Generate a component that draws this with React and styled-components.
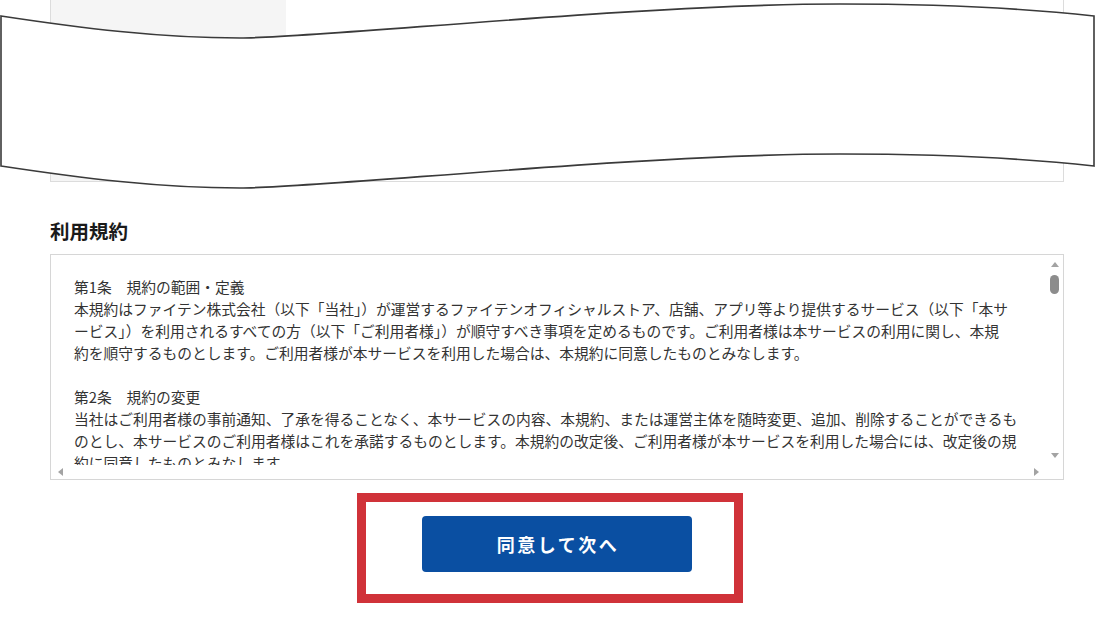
import React from "react";
import styled, { createGlobalStyle } from "styled-components";

const GlobalStyle = createGlobalStyle`
  body {
    margin: 0;
    background: #fff;
    font-family: "Noto Sans CJK JP", "Noto Sans", sans-serif;
    color: #333;
  }
`;

const Page = styled.div`
  position: relative;
  width: 1095px;
  height: 643px;
  overflow: hidden;
`;

const Content = styled.div`
  margin-left: 50px;
  width: 1014px;
  display: flex;
  flex-direction: column;
`;

const TopBox = styled.div`
  height: 182px;
  box-sizing: border-box;
  border: 1px solid #dcdcdc;
  border-top: none;
  display: flex;
`;

const GreyPanel = styled.div`
  width: 235px;
  background: #f5f5f5;
`;

const Wave = styled.svg`
  position: absolute;
  top: 0;
  left: 0;
  pointer-events: none;
`;

const Title = styled.h2`
  margin: 35px 0 9px;
  font-size: 19.5px;
  line-height: 28px;
  font-weight: 700;
  color: #1a1a1a;
`;

const ScrollBox = styled.div`
  height: 226px;
  box-sizing: border-box;
  border: 1px solid #d6d6d6;
  display: grid;
  grid-template-columns: 1fr 17px;
  grid-template-rows: 1fr 14px;
  overflow: hidden;
`;

const TermsText = styled.div`
  padding: 21px 20px 0 23px;
  font-size: 14.75px;
  line-height: 22px;
  color: #333;
  white-space: nowrap;
  overflow: hidden;
`;

const Para = styled.p`
  margin: 0 0 22px;
`;

const VBar = styled.div`
  display: flex;
  flex-direction: column;
  align-items: center;
  padding: 7px 0 7px;
`;

const HBar = styled.div`
  display: flex;
  align-items: center;
  justify-content: space-between;
  padding: 0 7px 0 7px;
`;

const Thumb = styled.div`
  width: 9px;
  height: 19px;
  border-radius: 5px;
  background: #8c8c8c;
  margin-top: 8px;
`;

const Spacer = styled.div`
  flex: 1;
`;

const Arrow = styled.div`
  width: 0;
  height: 0;
  border: 4px solid transparent;
  ${({ dir }) =>
    dir === "up"
      ? "border-bottom: 5px solid #a3a3a3; border-top-width: 0;"
      : dir === "down"
      ? "border-top: 5px solid #a3a3a3; border-bottom-width: 0;"
      : dir === "left"
      ? "border-right: 5px solid #a3a3a3; border-left-width: 0;"
      : "border-left: 5px solid #a3a3a3; border-right-width: 0;"}
`;

const ButtonRow = styled.div`
  display: flex;
  justify-content: center;
  margin-top: 13px;
`;

const Highlight = styled.div`
  margin-right: 14px;
  width: 386px;
  height: 110px;
  box-sizing: border-box;
  border: 9px solid #d03239;
  padding: 14px 42px 0 56px;
`;

const AgreeButton = styled.button`
  width: 270px;
  height: 56px;
  border: none;
  border-radius: 4px;
  background: #0a4fa2;
  color: #fff;
  font-family: "Noto Sans CJK JP", sans-serif;
  font-size: 18px;
  font-weight: 700;
  letter-spacing: 2.5px;
  padding: 0 0 0 2px;
  cursor: pointer;
`;

const terms = [
  [
    "第1条　規約の範囲・定義",
    "本規約はファイテン株式会社（以下「当社」）が運営するファイテンオフィシャルストア、店舗、アプリ等より提供するサービス（以下「本サ",
    "ービス」）を利用されるすべての方（以下「ご利用者様」）が順守すべき事項を定めるものです。ご利用者様は本サービスの利用に関し、本規",
    "約を順守するものとします。ご利用者様が本サービスを利用した場合は、本規約に同意したものとみなします。",
  ],
  [
    "第2条　規約の変更",
    "当社はご利用者様の事前通知、了承を得ることなく、本サービスの内容、本規約、または運営主体を随時変更、追加、削除することができるも",
    "のとし、本サービスのご利用者様はこれを承諾するものとします。本規約の改定後、ご利用者様が本サービスを利用した場合には、改定後の規",
    "約に同意したものとみなします。",
  ],
];

function App() {
  return (
    <Page>
      <GlobalStyle />
      <Content>
        <TopBox>
          <GreyPanel />
        </TopBox>
        <Title>利用規約</Title>
        <ScrollBox>
          <TermsText>
            {terms.map((lines, i) => (
              <Para key={i}>
                {lines.map((line, j) => (
                  <React.Fragment key={j}>
                    {line}
                    {j < lines.length - 1 && <br />}
                  </React.Fragment>
                ))}
              </Para>
            ))}
          </TermsText>
          <VBar>
            <Arrow dir="up" />
            <Thumb />
            <Spacer />
            <Arrow dir="down" />
          </VBar>
          <HBar>
            <Arrow dir="left" />
            <Arrow dir="right" />
          </HBar>
          <div />
        </ScrollBox>
        <ButtonRow>
          <Highlight>
            <AgreeButton>同意して次へ</AgreeButton>
          </Highlight>
        </ButtonRow>
      </Content>
      <Wave width="1095" height="200" viewBox="0 0 1095 200">
        <path
          d="M1,16 C80,28 160,38 240,38 C320,38 640,4 840,4 C960,4 1040,10 1094,16 L1094,166 C1040,160 960,154 840,154 C640,154 320,188 240,188 C160,188 80,178 1,166 Z"
          fill="#fff"
          stroke="#3a3a3a"
          strokeWidth="1.6"
        />
      </Wave>
    </Page>
  );
}

export default App;
